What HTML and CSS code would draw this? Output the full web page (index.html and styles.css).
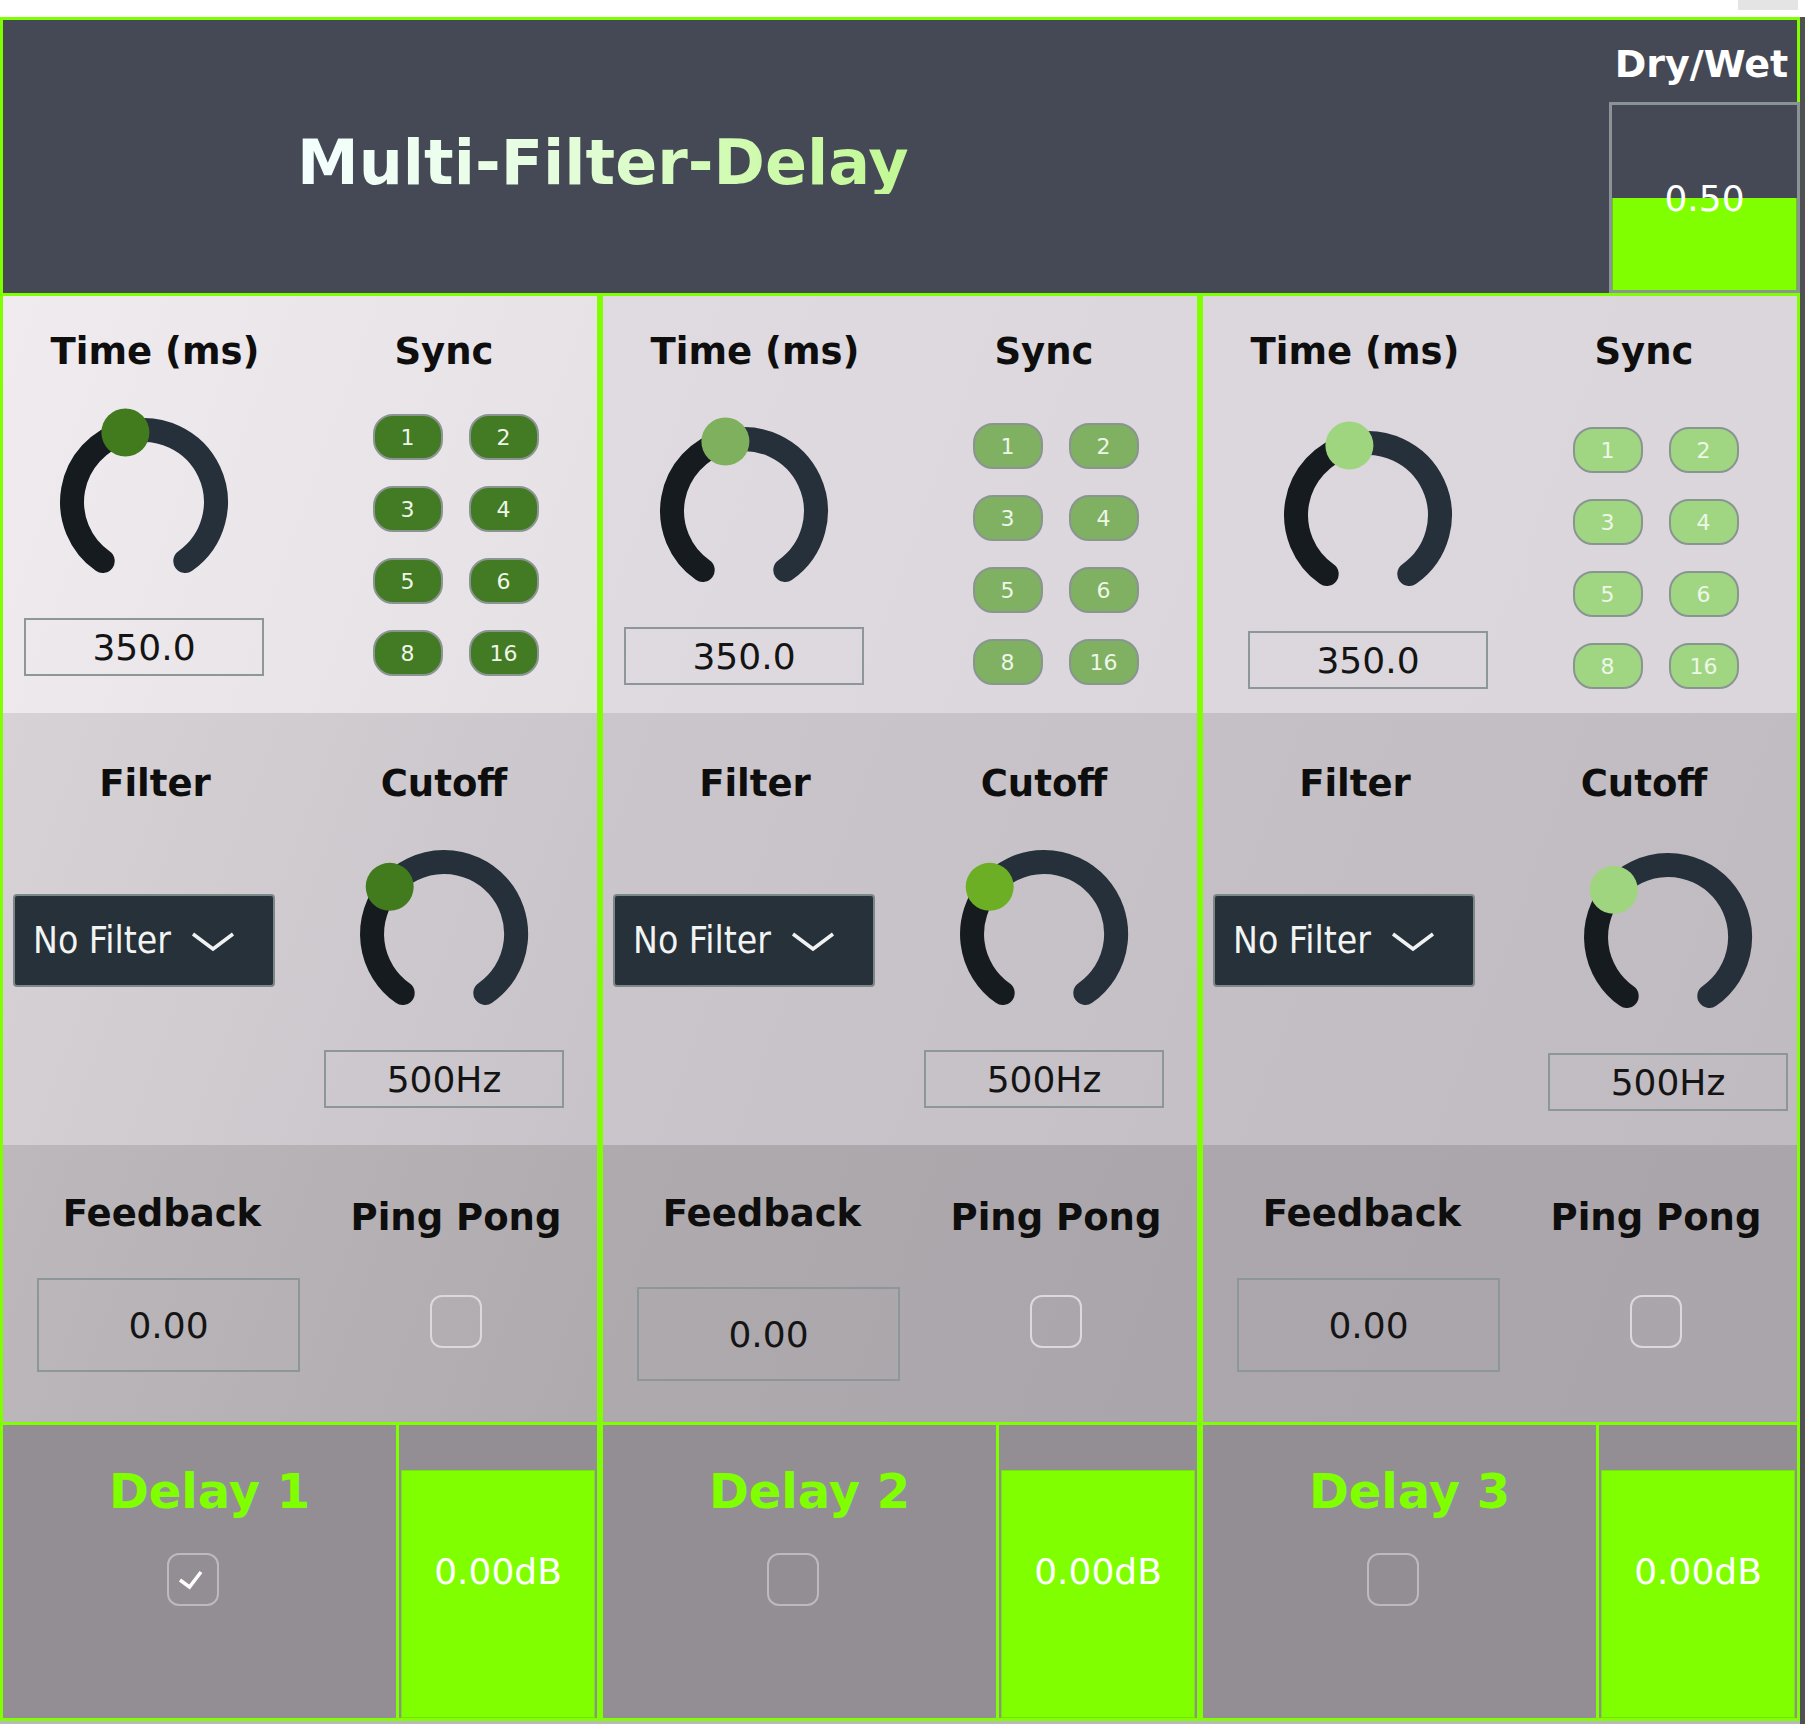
FILE: index.html
```html
<!DOCTYPE html>
<html lang="en">
<head>
<meta charset="utf-8">
<title>Multi-Filter-Delay</title>
<link rel="stylesheet" href="styles.css">
</head>
<body>
<div class="page">
  <div class="app">
    <div class="topbar"><div class="topbar-tab"></div></div>
    <header class="header">
      <h1 class="title"><span class="title-text">Multi-Filter-Delay</span></h1>
      <div class="drywet">
        <div class="drywet-label">Dry/Wet</div>
        <div class="drywet-box">
          <div class="drywet-fill" style="height:50%"></div>
          <div class="drywet-value">0.50</div>
        </div>
      </div>
    </header>

    <main class="columns">
      <!-- Column 1 -->
      <section class="col col-1">
        <div class="sec sec-time">
          <div class="half">
            <div class="label label-time">Time (ms)</div>
            <div class="knob-wrap knob-time">
              <svg class="knob" viewBox="0 0 200 200" width="200" height="200">
                <path class="arc-val" d="M58.7 159 A72 72 0 0 1 81.4 30.5"/>
                <path class="arc-rest" d="M81.4 30.5 A72 72 0 0 1 141.3 159"/>
                <circle class="thumb" cx="81.4" cy="30.5" r="24"/>
              </svg>
              <div class="valbox">350.0</div>
            </div>
          </div>
          <div class="half">
            <div class="label label-sync">Sync</div>
            <div class="sync-grid">
              <div class="sync-btn">1</div><div class="sync-btn">2</div>
              <div class="sync-btn">3</div><div class="sync-btn">4</div>
              <div class="sync-btn">5</div><div class="sync-btn">6</div>
              <div class="sync-btn">8</div><div class="sync-btn">16</div>
            </div>
          </div>
        </div>
        <div class="sec sec-filter">
          <div class="half">
            <div class="label label-filter">Filter</div>
            <div class="dropdown"><span class="dropdown-text">No Filter</span><svg class="chevron" viewBox="0 0 44 20" width="44" height="20"><polyline points="2,2 22,17 42,2"/></svg></div>
          </div>
          <div class="half">
            <div class="label label-cutoff">Cutoff</div>
            <div class="knob-wrap knob-cutoff">
              <svg class="knob" viewBox="0 0 200 200" width="200" height="200">
                <path class="arc-val" d="M58.7 159 A72 72 0 0 1 45.7 52.8"/>
                <path class="arc-rest" d="M45.7 52.8 A72 72 0 1 1 141.3 159"/>
                <circle class="thumb thumb-cut" cx="45.7" cy="52.8" r="24"/>
              </svg>
              <div class="valbox">500Hz</div>
            </div>
          </div>
        </div>
        <div class="sec sec-fb">
          <div class="half">
            <div class="label label-fb">Feedback</div>
            <div class="valbox valbox-fb">0.00</div>
          </div>
          <div class="half">
            <div class="label label-pp">Ping Pong</div>
            <div class="checkbox checkbox-pp"></div>
          </div>
        </div>
        <div class="delay-row">
          <div class="delay-main">
            <div class="delay-label">Delay 1</div>
            <div class="checkbox checkbox-delay">
              <svg class="check" viewBox="0 0 47 48" width="47" height="48"><polyline points="12,25 21.5,32 33,17"/></svg>
            </div>
          </div>
          <div class="meter">
            <div class="meter-fill" style="height:84.6%"></div>
            <div class="meter-value">0.00dB</div>
          </div>
        </div>
      </section>

      <!-- Column 2 -->
      <section class="col col-2">
        <div class="sec sec-time">
          <div class="half">
            <div class="label label-time">Time (ms)</div>
            <div class="knob-wrap knob-time">
              <svg class="knob" viewBox="0 0 200 200" width="200" height="200">
                <path class="arc-val" d="M58.7 159 A72 72 0 0 1 81.4 30.5"/>
                <path class="arc-rest" d="M81.4 30.5 A72 72 0 0 1 141.3 159"/>
                <circle class="thumb" cx="81.4" cy="30.5" r="24"/>
              </svg>
              <div class="valbox">350.0</div>
            </div>
          </div>
          <div class="half">
            <div class="label label-sync">Sync</div>
            <div class="sync-grid">
              <div class="sync-btn">1</div><div class="sync-btn">2</div>
              <div class="sync-btn">3</div><div class="sync-btn">4</div>
              <div class="sync-btn">5</div><div class="sync-btn">6</div>
              <div class="sync-btn">8</div><div class="sync-btn">16</div>
            </div>
          </div>
        </div>
        <div class="sec sec-filter">
          <div class="half">
            <div class="label label-filter">Filter</div>
            <div class="dropdown"><span class="dropdown-text">No Filter</span><svg class="chevron" viewBox="0 0 44 20" width="44" height="20"><polyline points="2,2 22,17 42,2"/></svg></div>
          </div>
          <div class="half">
            <div class="label label-cutoff">Cutoff</div>
            <div class="knob-wrap knob-cutoff">
              <svg class="knob" viewBox="0 0 200 200" width="200" height="200">
                <path class="arc-val" d="M58.7 159 A72 72 0 0 1 45.7 52.8"/>
                <path class="arc-rest" d="M45.7 52.8 A72 72 0 1 1 141.3 159"/>
                <circle class="thumb thumb-cut" cx="45.7" cy="52.8" r="24"/>
              </svg>
              <div class="valbox">500Hz</div>
            </div>
          </div>
        </div>
        <div class="sec sec-fb">
          <div class="half">
            <div class="label label-fb">Feedback</div>
            <div class="valbox valbox-fb">0.00</div>
          </div>
          <div class="half">
            <div class="label label-pp">Ping Pong</div>
            <div class="checkbox checkbox-pp"></div>
          </div>
        </div>
        <div class="delay-row">
          <div class="delay-main">
            <div class="delay-label">Delay 2</div>
            <div class="checkbox checkbox-delay"></div>
          </div>
          <div class="meter">
            <div class="meter-fill" style="height:84.6%"></div>
            <div class="meter-value">0.00dB</div>
          </div>
        </div>
      </section>

      <!-- Column 3 -->
      <section class="col col-3">
        <div class="sec sec-time">
          <div class="half">
            <div class="label label-time">Time (ms)</div>
            <div class="knob-wrap knob-time">
              <svg class="knob" viewBox="0 0 200 200" width="200" height="200">
                <path class="arc-val" d="M58.7 159 A72 72 0 0 1 81.4 30.5"/>
                <path class="arc-rest" d="M81.4 30.5 A72 72 0 0 1 141.3 159"/>
                <circle class="thumb" cx="81.4" cy="30.5" r="24"/>
              </svg>
              <div class="valbox">350.0</div>
            </div>
          </div>
          <div class="half">
            <div class="label label-sync">Sync</div>
            <div class="sync-grid">
              <div class="sync-btn">1</div><div class="sync-btn">2</div>
              <div class="sync-btn">3</div><div class="sync-btn">4</div>
              <div class="sync-btn">5</div><div class="sync-btn">6</div>
              <div class="sync-btn">8</div><div class="sync-btn">16</div>
            </div>
          </div>
        </div>
        <div class="sec sec-filter">
          <div class="half">
            <div class="label label-filter">Filter</div>
            <div class="dropdown"><span class="dropdown-text">No Filter</span><svg class="chevron" viewBox="0 0 44 20" width="44" height="20"><polyline points="2,2 22,17 42,2"/></svg></div>
          </div>
          <div class="half">
            <div class="label label-cutoff">Cutoff</div>
            <div class="knob-wrap knob-cutoff">
              <svg class="knob" viewBox="0 0 200 200" width="200" height="200">
                <path class="arc-val" d="M58.7 159 A72 72 0 0 1 45.7 52.8"/>
                <path class="arc-rest" d="M45.7 52.8 A72 72 0 1 1 141.3 159"/>
                <circle class="thumb thumb-cut" cx="45.7" cy="52.8" r="24"/>
              </svg>
              <div class="valbox">500Hz</div>
            </div>
          </div>
        </div>
        <div class="sec sec-fb">
          <div class="half">
            <div class="label label-fb">Feedback</div>
            <div class="valbox valbox-fb">0.00</div>
          </div>
          <div class="half">
            <div class="label label-pp">Ping Pong</div>
            <div class="checkbox checkbox-pp"></div>
          </div>
        </div>
        <div class="delay-row">
          <div class="delay-main">
            <div class="delay-label">Delay 3</div>
            <div class="checkbox checkbox-delay"></div>
          </div>
          <div class="meter">
            <div class="meter-fill" style="height:84.6%"></div>
            <div class="meter-value">0.00dB</div>
          </div>
        </div>
      </section>
    </main>
    <div class="bottombar"></div>
  </div>
  <div class="sidestrip"></div>
</div>
</body>
</html>
```

FILE: styles.css
```css
html, body {
  margin: 0;
  padding: 0;
  width: 1805px;
  height: 1724px;
  overflow: hidden;
  background: #ffffff;
  font-family: "DejaVu Sans", "Liberation Sans", sans-serif;
}

.page {
  display: flex;
  width: 1805px;
  height: 1724px;
}

.app {
  width: 1800px;
  display: flex;
  flex-direction: column;
}

.sidestrip {
  width: 5px;
  margin-top: 17px;
  height: 1707px;
  background: #4f5052;
}

.topbar {
  height: 17px;
  display: flex;
  justify-content: flex-end;
}

.topbar-tab {
  width: 60px;
  height: 10px;
  margin-right: 2px;
  background: #e4e4e4;
}

.bottombar {
  height: 3px;
  background: #b9b9bb;
}

/* ---------- Header ---------- */
.header {
  box-sizing: border-box;
  height: 279px;
  border: 3px solid #7fff00;
  background: #454955;
  display: flex;
  justify-content: space-between;
  align-items: flex-start;
}

.title {
  margin: 0;
  padding: 112px 0 0 294px;
  font-size: 62px;
  line-height: 62px;
  font-weight: bold;
}

.title-text {
  display: inline-block;
  background: linear-gradient(90deg, #f4ffff 0%, #e6fde0 40%, #d2fbb4 70%, #c2f894 100%);
  -webkit-background-clip: text;
  background-clip: text;
  color: transparent;
}

.drywet {
  width: 191px;
  margin-right: -3px;
  padding-top: 22px;
  display: flex;
  flex-direction: column;
  align-items: center;
}

.drywet-label {
  font-size: 38px;
  line-height: 44px;
  font-weight: bold;
  color: #ffffff;
  margin-right: 6px;
}

.drywet-box {
  box-sizing: border-box;
  margin-top: 16px;
  width: 191px;
  height: 191px;
  border: 3px solid #8a9396;
  display: grid;
}

.drywet-fill,
.drywet-value {
  grid-area: 1 / 1;
}

.drywet-fill {
  align-self: end;
  background: #80ff00;
  box-shadow: inset 1px 0 0 #6bc41a, inset -1px 0 0 #6bc41a;
}

.drywet-value {
  align-self: center;
  justify-self: center;
  font-size: 36px;
  line-height: 36px;
  color: #ffffff;
  margin-top: 2px;
}

/* ---------- Columns ---------- */
.columns {
  display: flex;
  height: 1425px;
}

.col {
  box-sizing: border-box;
  width: 600px;
  border: 3px solid #7fff00;
  border-top: 0;
  display: flex;
  flex-direction: column;
}

.sec {
  display: grid;
  grid-template-columns: 282px 312px;
  box-sizing: border-box;
}

.half {
  display: flex;
  flex-direction: column;
  align-items: center;
}

.label {
  font-size: 37px;
  line-height: 44px;
  font-weight: bold;
  color: #0e0e0e;
  white-space: nowrap;
}

.valbox {
  box-sizing: border-box;
  width: 240px;
  height: 58px;
  border: 2px solid #8d9799;
  display: flex;
  align-items: center;
  justify-content: center;
  font-size: 36px;
  color: #141414;
}

.knob {
  display: block;
}

.arc-val,
.arc-rest {
  fill: none;
  stroke-width: 24;
  stroke-linecap: round;
}

.arc-val { stroke: #151b1f; }
.arc-rest { stroke: #25303a; }

.knob-wrap {
  display: flex;
  flex-direction: column;
  align-items: center;
  margin-top: 28px;
}

.knob-wrap .valbox {
  margin-top: 16px;
}

/* Section 1: Time / Sync */
.sec-time {
  height: 417px;
  padding-top: 34px;
}

.label-time { margin-left: 22px; }
.label-sync { margin-left: 6px; }

.sync-grid {
  margin-top: 40px;
  margin-left: 29px;
  display: grid;
  grid-template-columns: 70px 70px;
  grid-auto-rows: 46px;
  column-gap: 26px;
  row-gap: 26px;
}

.sync-btn {
  box-sizing: border-box;
  border: 2px solid #8a9592;
  border-radius: 20px;
  display: flex;
  align-items: center;
  justify-content: center;
  font-size: 22px;
  color: #eef6e8;
}

/* Section 2: Filter / Cutoff */
.sec-filter {
  height: 432px;
  padding-top: 49px;
}

.label-filter { margin-left: 22px; }
.label-cutoff { margin-left: 6px; }

.dropdown {
  box-sizing: border-box;
  margin-top: 88px;
  width: 262px;
  height: 93px;
  border: 2px solid #7c8789;
  border-radius: 4px;
  background: #263139;
  display: flex;
  align-items: center;
  padding-left: 18px;
  gap: 20px;
}

.dropdown-text {
  font-family: "DejaVu Sans Condensed", "DejaVu Sans", sans-serif;
  font-stretch: condensed;
  font-size: 37px;
  color: #f2f4f4;
  white-space: nowrap;
}

.chevron {
  display: block;
  margin-top: 3px;
}

.chevron polyline {
  fill: none;
  stroke: #f0f2f2;
  stroke-width: 3.5;
}

.knob-cutoff {
  margin-left: 6px;
}

/* Section 3: Feedback / Ping Pong */
.sec-fb {
  height: 277px;
  padding-top: 47px;
}

.label-fb { margin-left: 36px; }
.label-pp { margin-left: 30px; margin-top: 4px; }

.valbox-fb {
  width: 263px;
  height: 94px;
  margin-top: 42px;
  margin-left: 49px;
}

.checkbox {
  box-sizing: border-box;
  width: 52px;
  height: 53px;
  border-radius: 12px;
  border: 2.5px solid #dcd8dc;
}

.checkbox-pp {
  margin-top: 55px;
  margin-left: 30px;
}

/* Delay row */
.delay-row {
  box-sizing: border-box;
  height: 296px;
  border-top: 3px solid #7fff00;
  background: #938e93;
  display: flex;
}

.delay-main {
  width: 393px;
  display: flex;
  flex-direction: column;
  align-items: center;
  padding-top: 38px;
}

.delay-label {
  font-size: 48px;
  line-height: 56px;
  font-weight: bold;
  color: #7fff00;
  margin-left: 20px;
  white-space: nowrap;
}

.checkbox-delay {
  margin-top: 34px;
  margin-right: 14px;
  border-color: #bdb9bd;
}

.check {
  display: block;
  margin: -0.5px 0 0 -0.5px;
}

.check polyline {
  fill: none;
  stroke: #ffffff;
  stroke-width: 3.5;
}

.meter {
  box-sizing: border-box;
  width: 201px;
  border-left: 3px solid #7fff00;
  padding: 0 2px;
  display: grid;
}

.meter-fill,
.meter-value {
  grid-area: 1 / 1;
}

.meter-fill {
  align-self: end;
  box-sizing: border-box;
  background: #80ff00;
  border: 1px solid #72e40a;
}

.meter-value {
  align-self: center;
  justify-self: center;
  font-size: 36px;
  color: #ffffff;
}

/* ---------- Per-column colours and nudges ---------- */
.col-1 .sec-time { background: linear-gradient(110deg, #efebef 0%, #e4e0e4 100%); }
.col-1 .sec-filter { background: linear-gradient(110deg, #d6d2d6 0%, #c8c3c8 100%); }
.col-1 .sec-fb { background: linear-gradient(110deg, #bcb8bc 0%, #aeaaae 100%); }

.col-2 .sec-time { background: linear-gradient(110deg, #e0dbe0 0%, #dbd6db 100%); }
.col-2 .sec-filter { background: linear-gradient(110deg, #cbc6cb 0%, #c5c0c5 100%); }
.col-2 .sec-fb { background: linear-gradient(110deg, #aeaaae 0%, #aaa5aa 100%); }

.col-3 .sec-time { background: linear-gradient(110deg, #dcd7dc 0%, #dbd6db 100%); }
.col-3 .sec-filter { background: linear-gradient(110deg, #c5c0c5 0%, #c0bbc0 100%); }
.col-3 .sec-fb { background: linear-gradient(110deg, #aca7ac 0%, #aaa5aa 100%); }

.col-1 .sync-btn { background: #437a24; }
.col-2 .sync-btn { background: #80b062; }
.col-3 .sync-btn { background: #a0d682; }

.col-1 .thumb { fill: #427a1e; }
.col-2 .thumb { fill: #7eb05e; }
.col-2 .thumb-cut { fill: #6cae24; }
.col-3 .thumb { fill: #9fd57e; }

.col-2 .knob-time { margin-top: 37px; }
.col-2 .sync-grid { margin-top: 49px; }
.col-2 .valbox-fb { margin-top: 51px; }

.col-3 .knob-time { margin-top: 41px; margin-left: 48px; }
.col-3 .sync-grid { margin-top: 53px; }
.col-3 .knob-cutoff { margin-top: 31px; margin-left: 54px; }
```
